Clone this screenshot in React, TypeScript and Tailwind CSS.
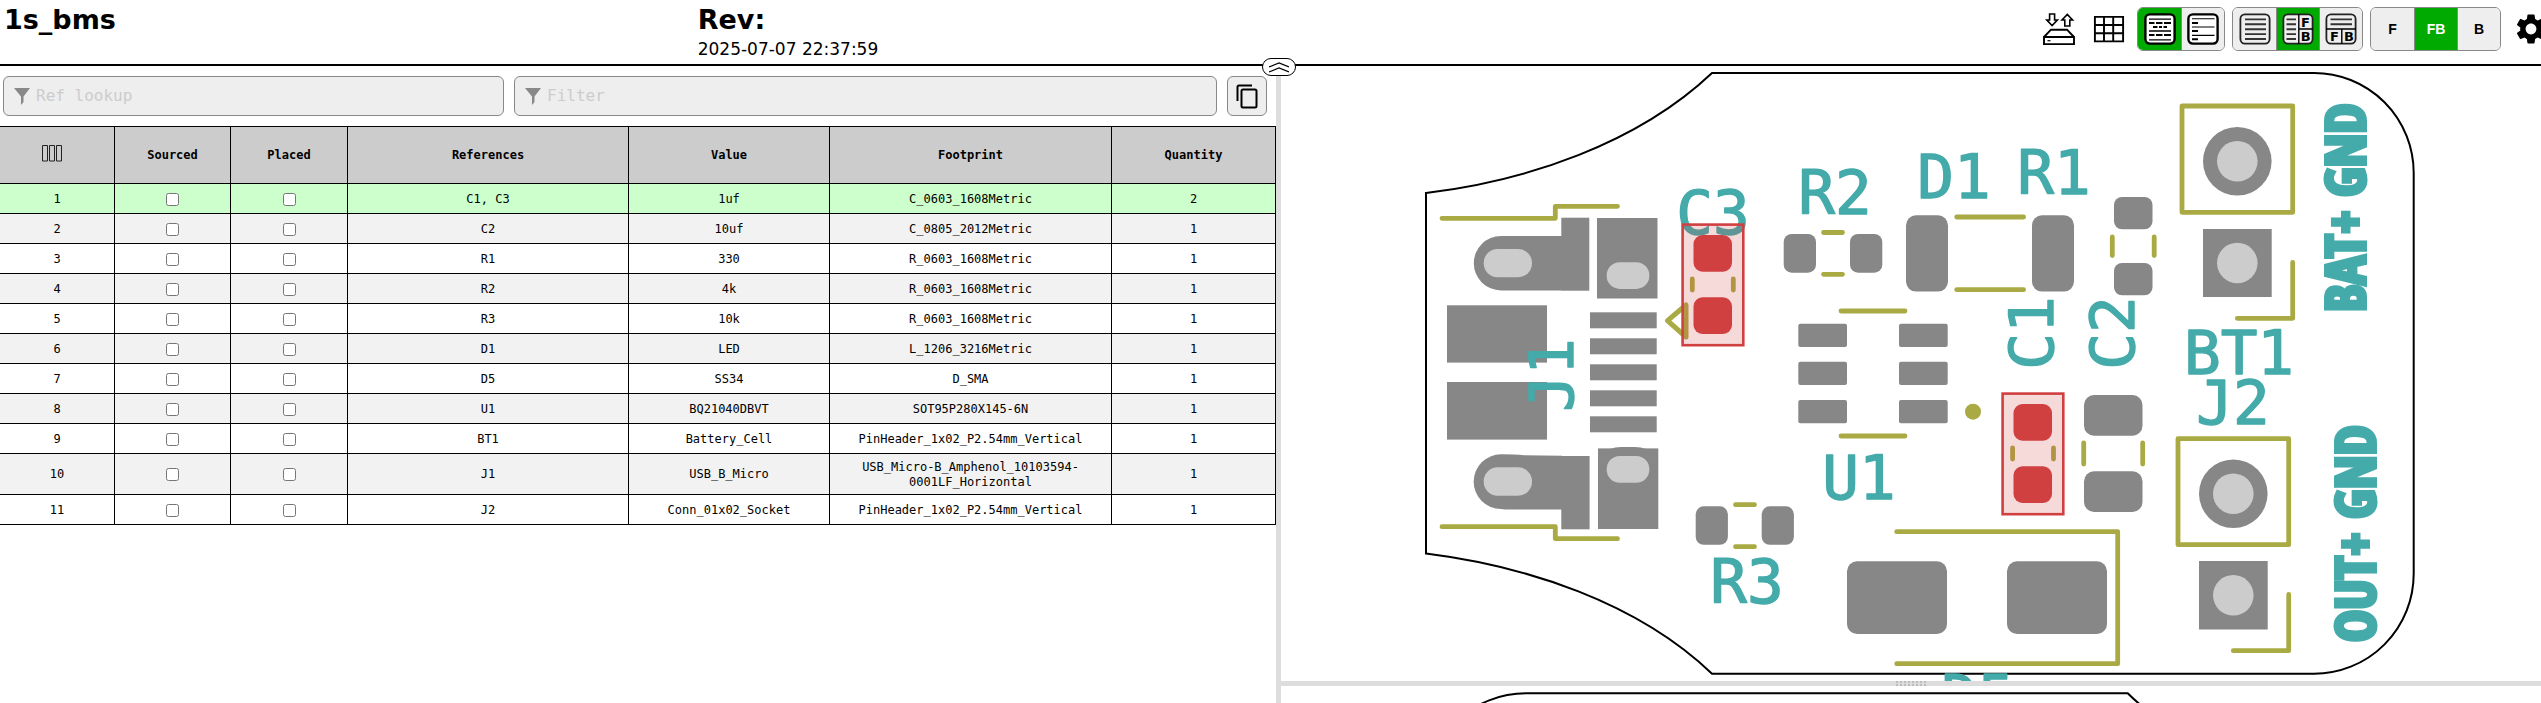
import React from "react";
import { MdSettings } from "react-icons/md";

type Row = [refs: string, value: string, footprint: string, quantity: number];

const rows: Row[] = [
  ["C1, C3", "1uf", "C_0603_1608Metric", 2],
  ["C2", "10uf", "C_0805_2012Metric", 1],
  ["R1", "330", "R_0603_1608Metric", 1],
  ["R2", "4k", "R_0603_1608Metric", 1],
  ["R3", "10k", "R_0603_1608Metric", 1],
  ["D1", "LED", "L_1206_3216Metric", 1],
  ["D5", "SS34", "D_SMA", 1],
  ["U1", "BQ21040DBVT", "SOT95P280X145-6N", 1],
  ["BT1", "Battery_Cell", "PinHeader_1x02_P2.54mm_Vertical", 1],
  ["J1", "USB_B_Micro", "USB_Micro-B_Amphenol_10103594-0001LF_Horizontal", 1],
  ["J2", "Conn_01x02_Socket", "PinHeader_1x02_P2.54mm_Vertical", 1],
];

const mono = "font-['DejaVu_Sans_Mono',monospace]";

function SaveIcon() {
  return (
    <svg viewBox="0 0 32 32" className="size-8" fill="none" stroke="#000" strokeWidth="1.6">
      <path d="M1 24H31V31.2H1Z M1 24L8 16.7H24L31 24" strokeWidth="1.9" />
      <path d="M4.5 27.7H7.5" strokeWidth="1.2" />
      <path d="M6.6 1H11.6V7H14.4L9.1 12.6L3.8 7H6.6Z" />
      <path d="M21.8 13H26.8V7H29.6L24.3 1.4L19 7H21.8Z" />
    </svg>
  );
}

function GridIcon() {
  return (
    <svg viewBox="0 0 32 32" className="size-8" fill="none" stroke="#000" strokeWidth="1.9">
      <path d="M1.9 3.9H30.1V28.4H1.9ZM11 3.9V28.4M20.2 3.9V28.4M1.9 12H30.1M1.9 20.2H30.1" />
    </svg>
  );
}

function Frame({ children, thin }: { children: React.ReactNode; thin?: boolean }) {
  return (
    <svg viewBox="0 0 32 32" className="size-8" fill="none" stroke="#000">
      <rect x="1.4" y="1.4" width="29.2" height="29.2" rx="4.5" fill={thin ? "#eee" : "#fff"} stroke={thin ? "#222" : "#000"} strokeWidth={thin ? 1.8 : 2.4} />
      {children}
    </svg>
  );
}

const FrameText = ({ x, y, t }: { x: number; y: number; t: string }) => (
  <text x={x} y={y} fontSize="13" fontFamily="DejaVu Sans, sans-serif" fill="#000" stroke="none" textAnchor="middle">
    {t}
  </text>
);

const BomDark = () => (
  <Frame>
    <path d="M5 6.2H27M5 18H27M5 26.8H27" strokeWidth="1.3" />
    <path d="M5 10H10.5M12 10H18.5M20 10H27M9 14H13.5M15 14H18M19.5 14H23M5 22H10.5M12 22H18.5M20 22H27" strokeWidth="1.8" />
  </Frame>
);
const BomList = () => (
  <Frame>
    <path d="M5 5.8H27.5M5 14H27.5M5 22.4H27.5" strokeWidth="1.1" />
    <path d="M5 10H11M5 18H11M5 26.2H11" strokeWidth="2" />
  </Frame>
);
const LayoutBom = () => (
  <Frame thin>
    <path d="M6 6.4H27M6 11.3H27M6 16.2H27M6 21.1H27M6 26H27" stroke="#333" strokeWidth="1.9" />
  </Frame>
);
const LayoutLR = () => (
  <Frame thin>
    <path d="M4.5 6.4H14M4.5 11.3H14M4.5 16.2H14M4.5 21.1H14M4.5 26H14" stroke="#333" strokeWidth="1.9" />
    <path d="M16.8 1V31M16.8 16H31" strokeWidth="1.4" />
    <FrameText x={23.5} y={14} t="F" />
    <FrameText x={23.8} y={28} t="B" />
  </Frame>
);
const LayoutTB = () => (
  <Frame thin>
    <path d="M5.5 6.4H27M5.5 11.3H27" stroke="#333" strokeWidth="1.9" />
    <path d="M16.8 16V31M1 16H31" strokeWidth="1.4" />
    <FrameText x={9.5} y={28} t="F" />
    <FrameText x={24} y={28} t="B" />
  </Frame>
);

type Choice = { label: string; content: React.ReactNode; active?: boolean };

function ButtonGroup({ choices }: { choices: Choice[] }) {
  return (
    <div className="flex h-11 overflow-hidden rounded-md border border-[#888]">
      {choices.map((c, i) => (
        <button
          key={c.label}
          aria-label={c.label}
          aria-pressed={!!c.active}
          className={`flex w-[43px] items-center justify-center font-['Liberation_Sans',sans-serif] text-sm font-bold ${i > 0 ? "border-l border-[#888]" : ""} ${c.active ? "bg-[#00aa00] text-white" : "bg-[#eee] text-black"}`}
        >
          {c.content}
        </button>
      ))}
    </div>
  );
}

function FilterBox({ label, grow }: { label: string; grow: string }) {
  return (
    <label className={`flex h-10 items-center rounded-md border border-[#888] bg-[#eee] pl-2.5 ${grow}`}>
      <svg viewBox="0 0 16 17" className="h-[17px] w-4 shrink-0" fill="#888">
        <path d="M0 0H16L9.5 8.5V14L7 17V8.5Z" />
      </svg>
      <input
        type="text"
        aria-label={label}
        placeholder={label}
        className={`ml-1.5 min-w-0 flex-1 bg-transparent text-base outline-none placeholder:text-[#ccc] ${mono}`}
      />
    </label>
  );
}

function BomTable() {
  const th = "border border-black px-1 font-bold";
  const td = "border border-black px-4 pt-px leading-[15px]";
  return (
    <table className={`-ml-px w-full table-fixed border-collapse text-center text-xs ${mono}`}>
      <colgroup>
        <col className="w-[115px]" />
        <col className="w-[116px]" />
        <col className="w-[117px]" />
        <col className="w-[281px]" />
        <col className="w-[201px]" />
        <col className="w-[282px]" />
        <col className="w-[164px]" />
      </colgroup>
      <thead>
        <tr className="h-[57px] bg-[#ccc]">
          <th className="border border-black pr-2.5 pb-1" aria-label="Columns">
            <svg viewBox="0 0 20 17" className="mx-auto h-[17px] w-5" fill="none" stroke="#222">
              <path d="M.5 .5H5.5V16H.5ZM7.5 .5H12.5V16H7.5ZM14.5 .5H19.5V16H14.5Z" />
            </svg>
          </th>
          {["Sourced", "Placed", "References", "Value", "Footprint", "Quantity"].map((h) => (
            <th key={h} className={th}>
              {h}
            </th>
          ))}
        </tr>
      </thead>
      <tbody>
        {rows.map(([refs, value, footprint, qty], i) => (
          <tr key={refs} className={`${footprint.length > 40 ? "h-[41px]" : "h-[30px]"} ${i === 0 ? "bg-[#cfc]" : i % 2 ? "bg-[#f2f2f2]" : "bg-white"}`}>
            <td className={td}>{i + 1}</td>
            {["Sourced", "Placed"].map((k) => (
              <td key={k} className={td}>
                <input type="checkbox" aria-label={`${k} ${refs}`} className="mx-auto block size-[13px]" />
              </td>
            ))}
            <td className={td}>{refs}</td>
            <td className={td}>{value}</td>
            <td className={td}>{footprint}</td>
            <td className={td}>{qty}</td>
          </tr>
        ))}
      </tbody>
    </table>
  );
}

// Pads as [x, y, width, height, corner radius] in board space.
const pads: number[][] = [
  [1561.3, 217.7, 28, 73, 0],
  [1597, 218, 60.5, 80.5, 0],
  [1561.3, 456, 28.3, 73.3, 0],
  [1598, 448.4, 60.3, 80.6, 0],
  [1447, 305.3, 100, 57.3, 0],
  [1447, 382, 100, 57.6, 0],
  [1590, 312.3, 66.7, 16, 0],
  [1590, 338.3, 66.7, 16, 0],
  [1590, 364.3, 66.7, 16, 0],
  [1590, 390.3, 66.7, 16, 0],
  [1590, 416.3, 66.7, 16, 0],
  [1783.7, 234, 32.3, 38.7, 8],
  [1850, 234, 32.3, 38.7, 8],
  [1906, 215.3, 42, 76.3, 10],
  [2032, 215.3, 42, 76.3, 10],
  [1798.3, 323.7, 48.7, 23.3, 2],
  [1798.3, 361.8, 48.7, 23.3, 2],
  [1798.3, 399.9, 48.7, 23.3, 2],
  [1899, 323.7, 48.7, 23.3, 2],
  [1899, 361.8, 48.7, 23.3, 2],
  [1899, 399.9, 48.7, 23.3, 2],
  [2114, 197, 38.5, 32.3, 8],
  [2114, 263, 38.5, 32.3, 8],
  [2084, 395, 58.5, 40.7, 10],
  [2084, 471.3, 58.5, 40.7, 10],
  [1695.7, 506.3, 32.2, 38.5, 8],
  [1761.7, 506.3, 32.2, 38.5, 8],
  [1847, 561.3, 100, 72.7, 10],
  [2007, 561.3, 100, 72.7, 10],
  [2203, 229, 68.7, 68, 0],
  [2199, 561, 68.7, 68.5, 0],
];

const holes: number[][] = [
  [1483.7, 249, 48.3, 28.3, 14],
  [1606.7, 262.3, 42.6, 26.6, 13],
  [1483.7, 467.3, 48.3, 28.5, 14],
  [1606.7, 456, 42.6, 26.7, 13],
];

const silk = [
  "M1442 218.3H1555.3V206.3H1617.5",
  "M1442 526.7H1555.3V538.7H1617.5",
  "M1692.3 279V290M1733.3 279V290",
  "M2012.6 448V459M2053.5 448V459",
  "M1823.5 232.5H1842.5M1823.5 274.3H1842.5",
  "M1956.7 217H2023.6M1956.7 289.7H2023.6",
  "M1841 311H1905M1841 436H1905",
  "M2112.3 237V255.5M2154.2 237V255.5",
  "M2083.7 443V464M2142.7 443V464",
  "M1735.5 504.7H1754.5M1735.5 546.7H1754.5",
  "M1896.7 531.7H2117.7V663.7H1896.7",
  "M2182 106H2292.7V212.3H2182Z",
  "M2237.3 318.3H2292.7V262.5",
  "M2178 438.7H2288.7V544.7H2178Z",
  "M2233.3 650.7H2288.7V594.5",
].join("");

// Designators as [text, x, y, rotated].
const labels: [string, number, number, boolean][] = [
  ["C3", 1713, 234, false],
  ["R2", 1835, 214, false],
  ["D1", 1954, 198, false],
  ["R1", 2054, 194, false],
  ["C1", 2053, 333, true],
  ["C2", 2134, 333, true],
  ["J1", 1573, 375, true],
  ["BT1", 2239, 374, false],
  ["J2", 2233, 424, false],
  ["U1", 1859, 499, false],
  ["R3", 1747, 603, false],
  ["D5", 1978, 718, false],
];

const highlights: [number, number][] = [
  [1681, 223],
  [2001, 392],
];

function FrontBoard() {
  return (
    <svg viewBox="1281 66 1260 615" className="absolute inset-0 size-full" fill="none">
      <g fill="#878787">
        {pads.map(([x, y, w, h, r], i) => (
          <rect key={i} x={x} y={y} width={w} height={h} rx={r} />
        ))}
        <path d="M1562 236H1501A27.2 27.2 0 0 0 1501 290.4H1562Z" />
        <path d="M1562 455.7L1524 455.3Q1515 454.3 1501 454.3A27.3 27.3 0 0 0 1501 509L1505 509.6H1562Z" />
        <path d="M1610 449Q1615 447 1621 447H1635Q1641 447 1646 449Z" />
        <circle cx="2237.3" cy="161.3" r="34.3" />
        <circle cx="2233.3" cy="493.7" r="34.3" />
      </g>
      <path
        d="M1426 193C1526 181 1637 144 1712 73H2314A99.7 100 0 0 1 2413.7 173V573.5A99.7 100 0 0 1 2314 673.7H1712C1637 602 1526 566 1426 553.5Z"
        stroke="#000"
        strokeWidth="2"
      />
      <path d={silk} stroke="#aa4" strokeWidth="4.8" strokeLinecap="round" strokeLinejoin="round" />
      <path d="M1686 305V337L1667.5 320.7Z" stroke="#aa4" strokeWidth="5" strokeLinejoin="round" />
      <circle cx="1973" cy="411.7" r="8" fill="#aa4" />
      <g fill="#4aa" stroke="#4aa" strokeWidth="1.4" strokeLinejoin="round" fontFamily="DejaVu Sans Mono, monospace" fontSize="61" textAnchor="middle">
        {labels.map(([t, x, y, rot]) => (
          <text key={t} transform={`translate(${x} ${y})${rot ? " rotate(-90)" : ""}`}>
            {t}
          </text>
        ))}
      </g>
      <g
        fill="#4aa"
        stroke="#4aa"
        strokeWidth="4"
        fontFamily="Open Sans Condensed, Roboto Condensed, Liberation Sans Narrow, DejaVu Sans Condensed, sans-serif"
        fontWeight="700"
        fontSize="54"
      >
        <text transform="translate(2365 312) rotate(-90)">BAT+ GND</text>
        <text transform="translate(2375 642) rotate(-90)">OUT+ GND</text>
      </g>
      <g fill="#ccc">
        {holes.map(([x, y, w, h, r], i) => (
          <rect key={i} x={x} y={y} width={w} height={h} rx={r} />
        ))}
        <circle cx="2237.3" cy="161.3" r="20.3" />
        <circle cx="2237.3" cy="263" r="20.3" />
        <circle cx="2233.3" cy="493.7" r="20.3" />
        <circle cx="2233.3" cy="595.3" r="20.3" />
      </g>
      {highlights.map(([x, y]) => (
        <g key={x} transform={`translate(${x} ${y})`}>
          <rect x="1.6" y="1.6" width="60.7" height="120.6" fill="#d04040" fillOpacity="0.2" stroke="#d04040" strokeWidth="2.6" />
          <rect x="12.5" y="12" width="38.5" height="36.7" rx="9" fill="#d04040" />
          <rect x="12.5" y="74.3" width="38.5" height="36.7" rx="9" fill="#d04040" />
        </g>
      ))}
    </svg>
  );
}

function BackBoard() {
  return (
    <svg viewBox="1281 686 1260 17" preserveAspectRatio="xMidYMin slice" className="absolute inset-0 size-full" fill="none">
      <path d="M1426 793.5A100 100 0 0 1 1526 693.3H2127.7Q2200 765 2414 813" stroke="#000" strokeWidth="2" />
    </svg>
  );
}

export default function App() {
  return (
    <div className="flex h-screen flex-col overflow-hidden bg-white text-black">
      <header className="flex h-[66px] shrink-0 items-start border-b-2 border-black font-['DejaVu_Sans',sans-serif]">
        <div className="w-[27.3%] shrink-0 pt-0.5 pl-1">
          <h1 className="text-[27px] leading-9 font-bold">1s_bms</h1>
        </div>
        <div className="flex-1 pt-0.5 pl-1">
          <p className="text-[27px] leading-9 font-bold">Rev:</p>
          <p className="text-[17px] leading-[22px]">2025-07-07 22:37:59</p>
        </div>
        <div className="flex items-center pt-[7px]">
          <button aria-label="Export">
            <SaveIcon />
          </button>
          <button aria-label="Statistics" className="ml-[18px]">
            <GridIcon />
          </button>
          <div className="ml-3">
            <ButtonGroup
              choices={[
                { label: "Grouped rows", content: <BomDark />, active: true },
                { label: "Ungrouped rows", content: <BomList /> },
              ]}
            />
          </div>
          <div className="ml-[7px]">
            <ButtonGroup
              choices={[
                { label: "BOM only", content: <LayoutBom /> },
                { label: "BOM left, drawings right", content: <LayoutLR />, active: true },
                { label: "BOM top, drawings bottom", content: <LayoutTB /> },
              ]}
            />
          </div>
          <div className="ml-[7px]">
            <ButtonGroup
              choices={[
                { label: "F", content: "F" },
                { label: "FB", content: "FB", active: true },
                { label: "B", content: "B" },
              ]}
            />
          </div>
          <button aria-label="Settings" className="-mr-2 ml-3">
            <MdSettings className="size-9" />
          </button>
        </div>
      </header>

      <div className="flex min-h-0 flex-1">
        <main className="min-w-0 flex-[1276_1_0%]">
          <div className="flex gap-2.5 py-2.5 pr-[9px] pl-[3px]">
            <FilterBox label="Ref lookup" grow="flex-[489_1_0%]" />
            <FilterBox label="Filter" grow="flex-[691_1_0%]" />
            <button aria-label="Copy" className="flex size-10 items-center justify-center rounded-md border border-[#888] bg-[#eee]">
              <svg viewBox="0 0 22 25" className="h-[25px] w-[22px]" fill="none" stroke="#000" strokeWidth="2">
                <path d="M1.5 17V3Q1.5 1.5 3 1.5H16" />
                <rect x="5.5" y="5.5" width="15" height="18" rx="1.5" />
              </svg>
            </button>
          </div>
          <BomTable />
        </main>

        <div className="relative w-[5px] shrink-0 bg-[#ddd]">
          <button
            aria-label="Collapse header"
            className="absolute -top-2 left-1/2 z-10 flex h-[18px] w-[34px] -translate-x-1/2 items-center justify-center rounded-[9px] border border-black bg-white"
          >
            <svg viewBox="0 0 20 11" className="h-[11px] w-5" fill="none" stroke="#000" strokeWidth="1.2">
              <path d="M0 5L10 1L20 5M0 10L10 6L20 10" />
            </svg>
          </button>
        </div>

        <section className="flex min-w-0 flex-[1260_1_0%] flex-col">
          <div className="relative min-h-0 flex-[615_1_0%] overflow-hidden">
            <FrontBoard />
          </div>
          <div className="flex h-[5px] shrink-0 items-center justify-center bg-[#ddd]">
            <svg viewBox="0 0 30 5" className="h-[5px] w-[30px]" stroke="#bbb" strokeWidth="2" strokeDasharray="2 2">
              <path d="M0 1H30M0 4H30" />
            </svg>
          </div>
          <div className="relative min-h-0 flex-[17_1_0%] overflow-hidden">
            <BackBoard />
          </div>
        </section>
      </div>
    </div>
  );
}
